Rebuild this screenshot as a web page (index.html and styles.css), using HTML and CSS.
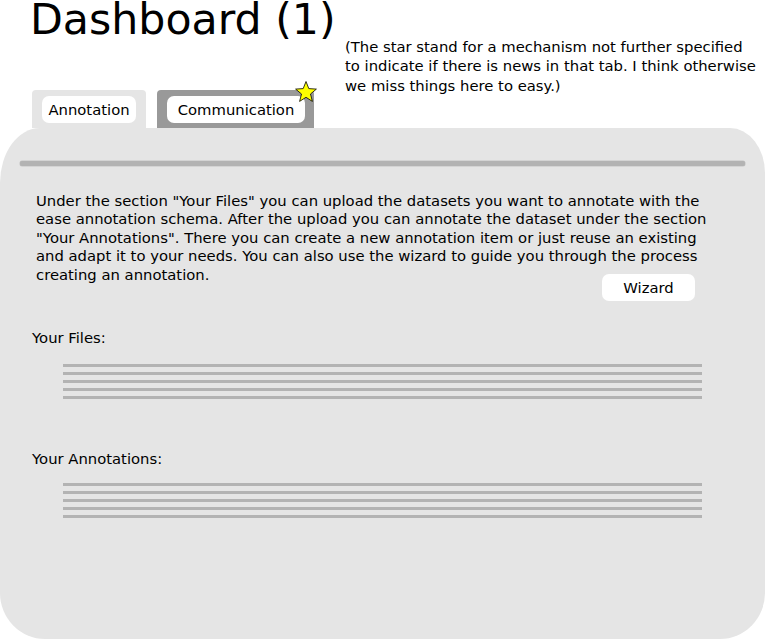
FILE: index.html
```html
<!DOCTYPE html>
<html>
<head>
<meta charset="utf-8">
<link rel="stylesheet" href="styles.css">
</head>
<body>
<div class="page">
  <header class="header">
    <div class="header-left">
      <h1 class="title">Dashboard (1)</h1>
      <nav class="tabs">
        <div class="tab tab-active"><span class="pill pill-annotation">Annotation</span></div>
        <div class="tab tab-inactive"><span class="pill pill-communication">Communication</span>
          <svg class="star" viewBox="0 0 24 24" width="24" height="24"><polygon points="12,1.5 14.8,8.6 22.4,9.1 16.5,14 18.4,21.4 12,17.3 5.6,21.4 7.5,14 1.6,9.1 9.2,8.6" fill="#ffff00" stroke="#000" stroke-width="0.8" stroke-linejoin="round"/></svg>
        </div>
      </nav>
    </div>
    <p class="note">(The star stand for a mechanism not further specified<br>to indicate if there is news in that tab. I think otherwise<br>we miss things here to easy.)</p>
  </header>
  <main class="panel">
    <div class="separator"></div>
    <p class="intro">Under the section "Your Files" you can upload the datasets you want to annotate with the<br>ease annotation schema. After the upload you can annotate the dataset under the section<br>"Your Annotations". There you can create a new annotation item or just reuse an existing<br>and adapt it to your needs. You can also use the wizard to guide you through the process<br>creating an annotation.</p>
    <div class="actions"><button class="btn">Wizard</button></div>
    <h2 class="section-title files-title">Your Files:</h2>
    <div class="list">
      <div class="list-line"></div>
      <div class="list-line"></div>
      <div class="list-line"></div>
      <div class="list-line"></div>
      <div class="list-line"></div>
    </div>
    <h2 class="section-title annotations-title">Your Annotations:</h2>
    <div class="list">
      <div class="list-line"></div>
      <div class="list-line"></div>
      <div class="list-line"></div>
      <div class="list-line"></div>
      <div class="list-line"></div>
    </div>
  </main>
</div>
</body>
</html>
```
FILE: styles.css
```css
html, body {
  margin: 0;
  padding: 0;
  background: #ffffff;
}
body {
  font-family: "DejaVu Sans", "Liberation Sans", sans-serif;
  color: #000;
  width: 765px;
  height: 639px;
  overflow: hidden;
}
.page {
  width: 765px;
  height: 639px;
  display: flex;
  flex-direction: column;
}
.header {
  display: flex;
  height: 128px;
  flex: none;
}
.header-left {
  width: 345px;
  flex: none;
  display: flex;
  flex-direction: column;
}
.title {
  margin: 0 0 0 30px;
  font-size: 42.7px;
  font-weight: normal;
  line-height: 38px;
  height: 38px;
  white-space: nowrap;
}
.tabs {
  margin-top: 52px;
  padding-left: 32px;
  display: flex;
  gap: 11px;
}
.tab {
  position: relative;
  height: 38px;
  box-sizing: border-box;
  padding: 6px 10px 0 10px;
  border-radius: 4px 4px 0 0;
}
.tab-active {
  background: #e5e5e5;
}
.tab-inactive {
  background: #999999;
  padding-right: 9px;
}
.pill {
  display: block;
  height: 27px;
  line-height: 27px;
  background: #ffffff;
  border-radius: 7px;
  font-size: 14.8px;
  text-align: center;
  white-space: nowrap;
}
.pill-annotation {
  width: 94px;
}
.pill-communication {
  width: 138px;
}
.star {
  position: absolute;
  left: 137px;
  top: -10px;
}
.note {
  margin: 37px 0 0 0;
  font-size: 14.8px;
  line-height: 19.4px;
  white-space: nowrap;
}
.panel {
  flex: 1;
  background: #e5e5e5;
  border-radius: 40px 35px 45px 45px / 55px 45px 46px 46px;
  display: flex;
  flex-direction: column;
}
.separator {
  margin: 33px 20px 0 20px;
  height: 5px;
  background: #b3b3b3;
  border-radius: 2px;
  box-shadow: 0 0 0 0.5px #c4c4c4;
}
.intro {
  margin: 25.5px 0 0 36px;
  font-size: 14.8px;
  line-height: 18.5px;
  white-space: nowrap;
}
.actions {
  display: flex;
  justify-content: flex-end;
  padding-right: 70px;
  margin-top: -10px;
}
.btn {
  width: 93px;
  height: 27px;
  border: none;
  background: #ffffff;
  border-radius: 7px;
  font-family: "DejaVu Sans", "Liberation Sans", sans-serif;
  font-size: 14.8px;
  color: #000;
  padding: 0;
}
.section-title {
  margin: 0 0 0 32px;
  font-size: 14.8px;
  font-weight: normal;
  line-height: 17.5px;
}
.files-title {
  margin-top: 28px;
}
.annotations-title {
  margin-top: 51px;
}
.list {
  margin: 17.5px 0 0 63px;
  width: 639px;
  display: flex;
  flex-direction: column;
  gap: 5px;
}
.annotations-title + .list {
  margin-top: 15px;
}
.list-line {
  height: 3px;
  background: #b3b3b3;
}
```
